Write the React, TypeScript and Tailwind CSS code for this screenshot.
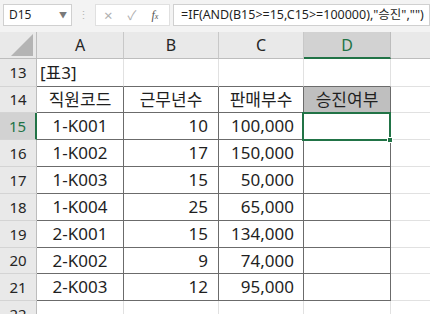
const cols = [
  { key: "A", w: "w-[87px]" },
  { key: "B", w: "w-[95px]" },
  { key: "C", w: "w-[85px]" },
  { key: "D", w: "w-[87px]" },
];

const data = [
  { row: 15, code: "1-K001", years: "10", sales: "100,000", h: "h-[27px]" },
  { row: 16, code: "1-K002", years: "17", sales: "150,000", h: "h-[27px]" },
  { row: 17, code: "1-K003", years: "15", sales: "50,000", h: "h-[27px]" },
  { row: 18, code: "1-K004", years: "25", sales: "65,000", h: "h-[27px]" },
  { row: 19, code: "2-K001", years: "15", sales: "134,000", h: "h-[27px]" },
  { row: 20, code: "2-K002", years: "9", sales: "74,000", h: "h-[26px]" },
  { row: 21, code: "2-K003", years: "12", sales: "95,000", h: "h-[27px]" },
];

function RowHead({ n, active }: { n: number; active?: boolean }) {
  return (
    <div
      className={`w-[37px] shrink-0 flex items-center justify-center text-[15px] border-b border-[#d4d4d4] ${
        active
          ? "bg-[#d2d2d2] text-[#217346] border-r-2 border-r-[#217346]"
          : "bg-[#e9e9e9] text-[#262626] border-r border-r-[#bdbdbd]"
      }`}
    >
      {n}
    </div>
  );
}

export default function App() {
  const dark = "border-[#6b6b6b]";
  const light = "border-[#e1e1e1]";

  return (
    <div
      className="w-[430px] h-[314px] overflow-hidden bg-white text-[#1f1f1f]"
      style={{ fontFamily: '"Noto Sans", "Noto Sans CJK KR", sans-serif' }}
    >
      {/* Formula bar */}
      <div className="h-[32px] bg-[#f3f3f3] flex items-start pt-[4px] pl-[3px]">
        <div className="w-[69px] h-[22px] bg-white border border-[#d0d0d0] flex items-center justify-between pl-[5px] pr-[4px]">
          <span className="text-[12px] leading-none">D15</span>
          <span className="text-[8px] text-[#7a7a7a] leading-none">▼</span>
        </div>
        <div className="w-[23px] h-[22px] flex items-center justify-center text-[#b5b5b5] text-[11px]">⋮</div>
        <div className="w-[75px] h-[22px] bg-white border border-[#e0e0e0] flex items-center pl-[8px] gap-[15px]">
          <span className="text-[#b0b0b0] text-[15px] leading-none">×</span>
          <span className="text-[#b0b0b0] text-[13px] leading-none">✓</span>
          <span className="text-[#555] text-[12px] italic leading-none" style={{ fontFamily: '"Liberation Serif", serif' }}>
            f<span className="text-[8px]">x</span>
          </span>
        </div>
        <div className="ml-[3px] flex-1 h-[22px] bg-white border border-[#d0d0d0] flex items-center pl-[7px] text-[12.5px] whitespace-nowrap">
          =IF(AND(B15&gt;=15,C15&gt;=100000),"승진","")
        </div>
      </div>

      {/* Column headers */}
      <div className="flex h-[27px]">
        <div className="w-[37px] shrink-0 bg-[#e9e9e9] border-r border-b border-[#bdbdbd] relative">
          <svg className="absolute right-[3px] bottom-[2px]" width="22" height="22" viewBox="0 0 22 22">
            <polygon points="22,0 22,22 0,22" fill="#b4b4b4" />
          </svg>
        </div>
        {cols.map((c) => (
          <div
            key={c.key}
            className={`${c.w} shrink-0 flex items-center justify-center text-[16px] ${
              c.key === "D"
                ? "bg-[#d2d2d2] text-[#217346] border-b-2 border-b-[#217346] border-r border-r-[#bdbdbd]"
                : "bg-[#e9e9e9] text-[#262626] border-b border-[#bdbdbd] border-r border-r-[#c8c8c8]"
            }`}
          >
            {c.key}
          </div>
        ))}
        <div className="flex-1 bg-[#e9e9e9] border-b border-[#bdbdbd]" />
      </div>

      {/* Grid */}
      <div className="relative text-[17px]">
        {/* Row 13 */}
        <div className="flex h-[28px]">
          <RowHead n={13} />
          <div className={`w-[87px] shrink-0 border-r ${light} border-b border-b-[#6b6b6b] flex items-center pl-[3px] whitespace-nowrap`}>
            [표3]
          </div>
          <div className={`w-[95px] shrink-0 border-r ${light} border-b border-b-[#6b6b6b]`} />
          <div className={`w-[85px] shrink-0 border-r ${light} border-b border-b-[#6b6b6b]`} />
          <div className={`w-[87px] shrink-0 border-r ${light} border-b border-b-[#6b6b6b]`} />
          <div className={`flex-1 border-b ${light}`} />
        </div>

        {/* Row 14 */}
        <div className="flex h-[26px]">
          <RowHead n={14} />
          {["직원코드", "근무년수", "판매부수", "승진여부"].map((t, i) => (
            <div
              key={t}
              className={`${cols[i].w} shrink-0 border-r border-b ${dark} flex items-center justify-center whitespace-nowrap ${
                i === 3 ? "bg-[#bfbfbf]" : ""
              }`}
            >
              {t}
            </div>
          ))}
          <div className={`flex-1 border-b ${light}`} />
        </div>

        {/* Data rows */}
        {data.map((d) => (
          <div key={d.row} className={`flex ${d.h}`}>
            <RowHead n={d.row} active={d.row === 15} />
            <div className={`w-[87px] shrink-0 border-r border-b ${dark} flex items-center justify-center`}>{d.code}</div>
            <div className={`w-[95px] shrink-0 border-r border-b ${dark} flex items-center justify-end pr-[10px]`}>{d.years}</div>
            <div className={`w-[85px] shrink-0 border-r border-b ${dark} flex items-center justify-end pr-[9px]`}>{d.sales}</div>
            <div className={`w-[87px] shrink-0 border-r border-b ${dark}`} />
            <div className={`flex-1 border-b ${light}`} />
          </div>
        ))}

        {/* Row 22 */}
        <div className="flex h-[27px]">
          <RowHead n={22} />
          {cols.map((c) => (
            <div key={c.key} className={`${c.w} shrink-0 border-r border-b ${light}`} />
          ))}
          <div className={`flex-1 border-b ${light}`} />
        </div>

        {/* Active cell D15 */}
        <div className="absolute left-[302px] top-[53px] w-[89px] h-[29px] border-2 border-[#217346] pointer-events-none">
          <div className="absolute -right-[4px] -bottom-[4px] w-[6px] h-[6px] bg-[#217346] border border-white" />
        </div>
      </div>
    </div>
  );
}
